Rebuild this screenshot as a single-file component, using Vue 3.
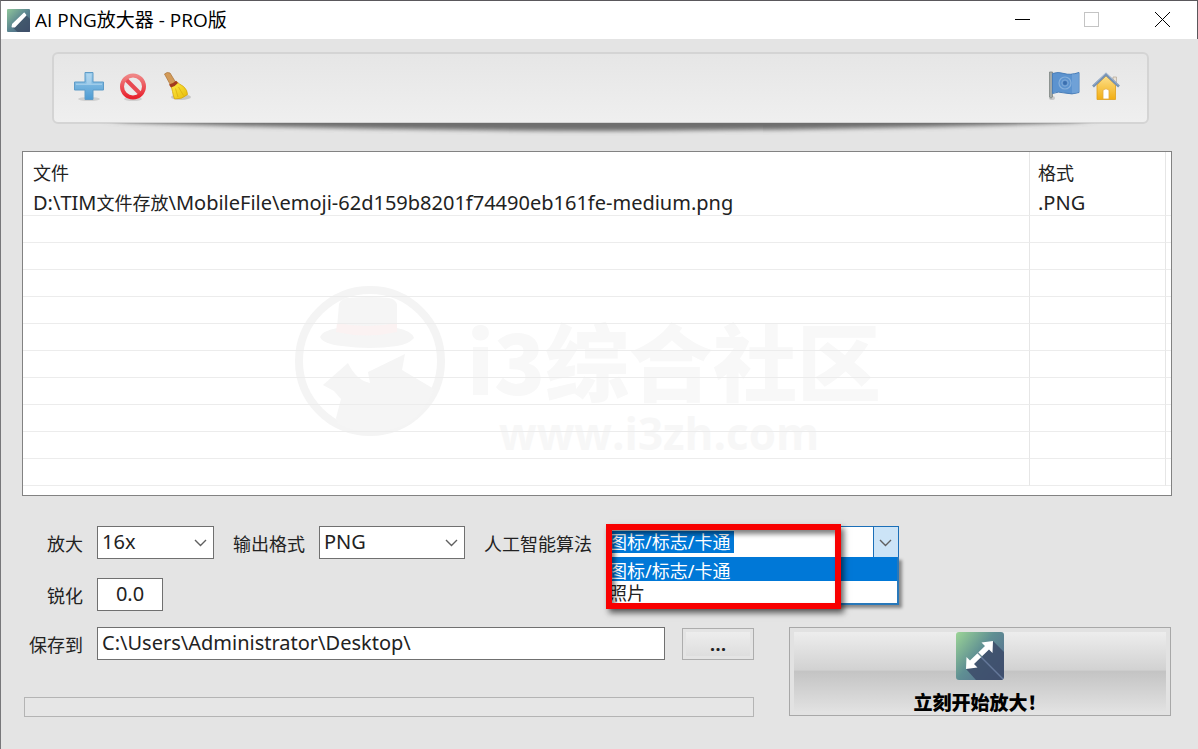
<template>
    <div class="window">
        <header class="titlebar">
            <svg class="app-icon" viewBox="0 0 48 48" aria-hidden="true">
                <defs>
                    <linearGradient id="logo-small" x1="0" y1="0" x2="1" y2="1">
                        <stop offset="0" stop-color="#8fc79a" />
                        <stop offset="0.5" stop-color="#5b8590" />
                        <stop offset="1" stop-color="#4a5c80" />
                    </linearGradient>
                </defs>
                <rect width="48" height="48" rx="2" fill="url(#logo-small)" />
                <path d="M38 11 48 21V48H22L10 37Z" fill="#39495f" opacity="0.7" />
                <path d="M36 9 39 13 16 37 11 37 12 32Z" fill="#fff" stroke="#fff" stroke-width="3" stroke-linejoin="round" />
            </svg>
            <h1>AI PNG放大器 - PRO版</h1>
            <div class="window-buttons">
                <button type="button" aria-label="最小化">
                    <svg viewBox="0 0 16 16"><path d="M1 7.500H16" stroke="#000" /></svg>
                </button>
                <button type="button" aria-label="最大化" disabled>
                    <svg viewBox="0 0 16 16"><rect x="0.500" y="0.500" width="14" height="14" fill="none" stroke="#c4c4c4" /></svg>
                </button>
                <button type="button" aria-label="关闭">
                    <svg viewBox="0 0 16 16"><path d="M1 0 16 15M16 0 1 15" stroke="#000" /></svg>
                </button>
            </div>
        </header>

        <main>
            <div class="toolbar">
                <div class="toolbar-panel">
                    <button type="button" aria-label="添加">
                        <svg viewBox="0 0 32 32">
                            <defs>
                                <linearGradient id="plus" x1="0" y1="0" x2="0" y2="1">
                                    <stop offset="0" stop-color="#9dccea" />
                                    <stop offset="1" stop-color="#4d9bd3" />
                                </linearGradient>
                            </defs>
                            <ellipse cx="16" cy="29" rx="11" ry="2" fill="#000" opacity="0.120" />
                            <path d="M12 2.500H20V12H30.500V20H20V29.500H12V20H1.500V12H12Z" fill="url(#plus)" stroke="#5f9cc8" />
                            <path d="M13.500 4H18.500V13.500H29V15H3V13.500H13.500Z" fill="#c5e2f4" opacity="0.500" />
                        </svg>
                    </button>
                    <button type="button" aria-label="移除">
                        <svg viewBox="0 0 32 32">
                            <defs>
                                <linearGradient id="ban" x1="0" y1="0" x2="0" y2="1">
                                    <stop offset="0" stop-color="#ef8585" />
                                    <stop offset="1" stop-color="#e8222e" />
                                </linearGradient>
                            </defs>
                            <ellipse cx="16" cy="29" rx="9" ry="2" fill="#000" opacity="0.120" />
                            <path d="M8 8.500 24 24.500" stroke="#e84a52" stroke-width="4" />
                            <circle cx="16" cy="16.500" r="11" fill="none" stroke="url(#ban)" stroke-width="4" />
                        </svg>
                    </button>
                    <button type="button" aria-label="清空">
                        <svg viewBox="0 0 32 32">
                            <defs>
                                <linearGradient id="broom" x1="0" y1="0" x2="1" y2="1">
                                    <stop offset="0" stop-color="#fff04a" />
                                    <stop offset="1" stop-color="#e8ba08" />
                                </linearGradient>
                            </defs>
                            <ellipse cx="20" cy="27" rx="10" ry="3" fill="#000" opacity="0.160" />
                            <path d="M3.500 4Q6 1.500 9 3L14.500 12 9.500 15Z" fill="#d29a58" stroke="#b07a40" stroke-width="0.800" />
                            <path d="M9 15 15.500 11.500Q18 14 22.500 16.500 26.500 20 26.500 24.500 21 29.500 13.500 29 12 25 11.500 21.500 11 17.500 9 15Z" fill="url(#broom)" stroke="#d5a50b" stroke-width="0.800" />
                            <path d="M14.500 18.500 17 27M17.500 17 22.500 25.500" stroke="#dcb010" stroke-width="0.800" fill="none" />
                            <path d="M8 14.500Q12 14 15 10.800L17 13Q14 16.500 10 17.500Z" fill="#a33a1f" />
                        </svg>
                    </button>
                    <span class="spacer"></span>
                    <button type="button" aria-label="语言">
                        <svg viewBox="0 0 32 32">
                            <ellipse cx="4" cy="28" rx="3" ry="2" fill="#000" opacity="0.150" />
                            <path d="M1.500 2H4.500V27Q3 29.500 1.500 27Z" fill="#a4aaa8" stroke="#7d8583" stroke-width="0.800" />
                            <path d="M4.500 3.500Q10 1.500 16 3.500T31 2.500V22.500Q24 25 17 23T4.500 23.500Z" fill="#5c93cf" stroke="#4a7eb8" />
                            <path d="M24 4Q28 4.500 31 3V22Q27 24 24 23Z" fill="#82b0df" opacity="0.500" />
                            <circle cx="17" cy="13" r="6" fill="none" stroke="#86b0dc" stroke-width="1.200" />
                            <circle cx="17" cy="13" r="3.200" fill="none" stroke="#7faad8" />
                            <circle cx="17" cy="13" r="2" fill="#3b6fae" />
                        </svg>
                    </button>
                    <button type="button" aria-label="主页">
                        <svg viewBox="0 0 32 32">
                            <defs>
                                <linearGradient id="house" x1="0" y1="0" x2="0" y2="1">
                                    <stop offset="0" stop-color="#fde08c" />
                                    <stop offset="1" stop-color="#f2ae12" />
                                </linearGradient>
                            </defs>
                            <path d="M23 7H26.500V14L23 11Z" fill="#e9e1d5" stroke="#b5a896" stroke-width="0.700" />
                            <path d="M7 15 16 6 25.500 15V29.500H7Z" fill="url(#house)" stroke="#e0a01a" stroke-width="0.800" />
                            <path d="M13 20Q16 17.500 19 20V29H13Z" fill="#fff" stroke="#e3a93a" stroke-width="0.800" />
                            <path d="M3 16.500 16 4.200 29 16.500" fill="none" stroke="#7591b3" stroke-width="2.600" />
                            <path d="M3.500 15 16 3.200 28.500 15" fill="none" stroke="#a9bdd4" stroke-width="0.800" />
                        </svg>
                    </button>
                </div>
                <svg class="toolbar-shadow" viewBox="0 0 1000 16" preserveAspectRatio="none" aria-hidden="true">
                    <defs>
                        <filter id="soften" filterUnits="userSpaceOnUse" x="0" y="-20" width="1000" height="50">
                            <feGaussianBlur stdDeviation="8 2" />
                        </filter>
                    </defs>
                    <path d="M60 -12H940V-1Q750 7 500 8 250 7 60 -1Z" fill="#6e6e6e" filter="url(#soften)" />
                </svg>
            </div>

            <div class="file-list">
                <svg class="watermark" viewBox="0 0 590 190" aria-hidden="true">
                    <circle cx="75" cy="75" r="71" fill="none" stroke="#f4f4f4" stroke-width="8" />
                    <g fill="#f5f5f5">
                        <path d="M44 18Q46 13 52 12 75 10 94 12 100 13 102 18V42Q117 45 119 52 114 58 102 60 75 64 47 60 28 58 25 51 27 45 42 42Z" />
                        <path d="M28 99 53 77Q61 94 75 97L73 86 110 68 107 84 139 103Q130 128 111 138 76 154 43 138L41 132 46 113 39 105Z" />
                    </g>
                    <path d="M42 37Q72 43 102 37V46Q72 53 41 46Z" fill="#fbf2f2" />
                    <text x="172" y="109" class="mark-name">i3综合社区</text>
                    <text x="204" y="164" class="mark-url">www.i3zh.com</text>
                </svg>
                <table>
                    <thead>
                        <tr>
                            <th scope="col">文件</th>
                            <th scope="col" class="format">格式</th>
                            <th class="edge" aria-hidden="true"></th>
                        </tr>
                    </thead>
                    <tbody>
                        <tr>
                            <td>D:\TIM<span class="han">文件存放</span>\MobileFile\emoji-62d159b8201f74490eb161fe-medium.png</td>
                            <td class="format">.PNG</td>
                            <td class="edge"></td>
                        </tr>
                        <tr v-for="n in emptyRows" :key="n">
                            <td></td>
                            <td class="format"></td>
                            <td class="edge"></td>
                        </tr>
                    </tbody>
                </table>
            </div>

            <form class="settings" @submit.prevent>
                <div class="row">
                    <label class="lead" for="scale">放大</label>
                    <div class="select scale">
                        <select id="scale" v-model="scale">
                            <option v-for="s in scales" :key="s">{{ s }}</option>
                        </select>
                        <svg viewBox="0 0 12 8" aria-hidden="true"><path d="M0.500 1 6 6.500 11.500 1" /></svg>
                    </div>
                    <label class="inner" for="format">输出格式</label>
                    <div class="select output">
                        <select id="format" v-model="format">
                            <option v-for="f in formats" :key="f">{{ f }}</option>
                        </select>
                        <svg viewBox="0 0 12 8" aria-hidden="true"><path d="M0.500 1 6 6.500 11.500 1" /></svg>
                    </div>
                    <label class="inner" for="model">人工智能算法</label>
                    <div class="select model open">
                        <select id="model" v-model="model">
                            <option v-for="m in models" :key="m">{{ m }}</option>
                        </select>
                        <svg viewBox="0 0 12 8" aria-hidden="true"><path d="M0.500 1 6 6.500 11.500 1" /></svg>
                        <ul role="listbox" aria-label="人工智能算法">
                            <li
                                v-for="m in models"
                                :key="m"
                                role="option"
                                :aria-selected="m === model"
                                :class="{ active: m === model }"
                                @click="model = m"
                            >{{ m }}</li>
                        </ul>
                        <div class="highlight"></div>
                    </div>
                </div>

                <div class="row sharpen">
                    <label class="lead" for="sharpen">锐化</label>
                    <input id="sharpen" v-model="sharpen" type="text">
                </div>

                <div class="bottom">
                    <div class="target">
                        <div class="row">
                            <label class="lead" for="folder">保存到</label>
                            <input id="folder" v-model="folder" type="text">
                            <button type="button" class="browse" aria-label="浏览">...</button>
                        </div>
                        <div class="progress" role="progressbar" aria-valuenow="0" aria-valuemin="0" aria-valuemax="100"></div>
                    </div>
                    <button type="submit" class="start">
                        <svg viewBox="0 0 48 48" aria-hidden="true">
                            <defs>
                                <linearGradient id="logo" x1="0" y1="0" x2="1" y2="0.800">
                                    <stop offset="0" stop-color="#9cd596" />
                                    <stop offset="0.500" stop-color="#5f8f93" />
                                    <stop offset="1" stop-color="#566a90" />
                                </linearGradient>
                            </defs>
                            <rect width="48" height="48" rx="3" fill="url(#logo)" />
                            <path d="M37 9 48 20V45L46 48H20L10 37Z" fill="#3c4b69" opacity="0.850" />
                            <path d="M24 24 47 47" stroke="#65789a" stroke-width="1.500" />
                            <path d="M37 9 36.500 21 33 17.500 18 32 21.500 35.500 10 37 10.500 25 14 28.500 29 14 25.500 10.500Z" fill="#fff" />
                            <path d="M21.500 20.500 26 25" stroke="#6c8b94" stroke-width="1.200" />
                        </svg>
                        <span>立刻开始放大！</span>
                    </button>
                </div>
            </form>
        </main>
    </div>
</template>

<script setup>
    import { ref } from 'vue';

    const emptyRows = 10;
    const scales = ['2x', '4x', '8x', '16x'];
    const formats = ['PNG', 'JPG', 'BMP'];
    const models = ['图标/标志/卡通', '照片'];

    const scale = ref('16x');
    const format = ref('PNG');
    const model = ref('图标/标志/卡通');
    const sharpen = ref('0.0');
    const folder = ref('C:\\Users\\Administrator\\Desktop\\');
</script>

<style>
body {
  background: #e4e4e4;
}
</style>

<style scoped>
.window {
  min-height: 100vh;
  box-sizing: border-box;
  border-top: 1px solid #5a585c;
  border-left: 1px solid #77777a;
  background: #e4e4e4;
  font-family: "Noto Sans", "Noto Sans CJK SC", sans-serif;
  font-size: 20px;
  color: #222;
}
button,
input,
select {
  box-sizing: border-box;
  margin: 0;
  padding: 0;
  border: 0;
  background: none;
  font: inherit;
  color: inherit;
}
.titlebar {
  display: flex;
  align-items: center;
  height: 38px;
  padding-left: 6px;
  border-right: 1px solid #5a585c;
  background: #fff;
}
.app-icon {
  width: 23px;
  height: 23px;
}
h1 {
  flex: 1;
  margin: 0 0 0 5px;
  font-family: "Open Sans", "Noto Sans CJK SC", sans-serif;
  font-size: 19px;
  font-weight: 400;
  line-height: 24px;
  color: #000;
}
.window-buttons {
  display: flex;
}
.window-buttons button {
  display: flex;
  justify-content: center;
  align-items: center;
  width: 70px;
  height: 38px;
}
.window-buttons svg {
  width: 16px;
  height: 16px;
  overflow: visible;
}
main {
  padding: 13px 26px 32px 21px;
}
.toolbar {
  margin: 0 23px 0 30px;
}
.toolbar-panel {
  display: flex;
  align-items: center;
  gap: 12px;
  height: 72px;
  box-sizing: border-box;
  padding: 0 25px 4px 19px;
  border: 2px solid #d4d4d4;
  border-radius: 6px;
  background: linear-gradient(#e6e6e6, #efefef);
}
.toolbar-panel button {
  width: 32px;
  height: 32px;
}
.toolbar-panel button svg {
  display: block;
  width: 32px;
  height: 32px;
}
.toolbar-panel .spacer {
  flex: 1;
}
.toolbar-panel .spacer ~ button + button {
  margin-left: -2px;
}
.toolbar-shadow {
  display: block;
  width: 100%;
  height: 16px;
  margin-top: -1px;
}
.file-list {
  position: relative;
  margin-top: 12px;
  padding-bottom: 9px;
  border: 1px solid #828282;
  background: #fff;
}
.watermark {
  position: absolute;
  top: 134px;
  left: calc(50% - 302px);
  width: 590px;
  height: 190px;
}
.mark-name {
  font-family: "Noto Sans CJK SC", sans-serif;
  font-size: 84px;
  font-weight: 900;
  fill: #f8f8f8;
}
.mark-url {
  font-family: "Open Sans", sans-serif;
  font-size: 44px;
  font-weight: 700;
  fill: #f7f7f7;
}
table {
  position: relative;
  width: 100%;
  border-collapse: separate;
  border-spacing: 0;
  table-layout: fixed;
}
th,
td {
  box-sizing: border-box;
  padding: 0 0 0 10px;
  text-align: left;
  font-weight: 400;
  white-space: nowrap;
}
th {
  height: 37px;
  padding-top: 2px;
  font-size: 18px;
}
td {
  height: 27px;
  padding-top: 2px;
  border-bottom: 1px solid #ececec;
  line-height: 24px;
}
.format {
  width: 136px;
  padding-left: 8px;
  border-left: 1px solid #e6e6e6;
}
.edge {
  width: 6px;
  padding: 0;
  border-left: 1px solid #e6e6e6;
}
.han {
  font-size: 18px;
}
.settings {
  padding-top: 30px;
}
.row {
  display: flex;
  align-items: center;
}
label {
  font-size: 18px;
  line-height: 26px;
  padding-top: 2px;
  white-space: nowrap;
}
.lead {
  width: 61px;
  margin-right: 14px;
  text-align: right;
}
.inner {
  margin: 0 14px 0 19px;
}
.select {
  position: relative;
}
.select select,
input {
  height: 33px;
  border: 1px solid #707070;
  background: #fff;
  line-height: 26px;
}
.select select {
  display: block;
  width: 100%;
  padding: 0 24px 2px 4px;
  appearance: none;
}
.select > svg {
  position: absolute;
  top: 13px;
  right: 7px;
  width: 13px;
  height: 8px;
  fill: none;
  stroke: #606060;
  stroke-width: 1.4;
  pointer-events: none;
}
.scale {
  width: 117px;
}
.output {
  width: 146px;
}
.model {
  width: 293px;
  font-size: 18px;
}
.model select {
  border-color: #1b6fb8;
  padding-left: 2px;
  color: #fff;
  background:
    linear-gradient(#1b6fb8, #1b6fb8) right 24px top / 1px 100% no-repeat,
    linear-gradient(#cce4f7, #cce4f7) right top / 24px 100% no-repeat,
    linear-gradient(#0078d7, #0078d7) left 1px top 4px / 126px 22px no-repeat,
    #fff;
}
.model select option {
  color: #111;
}
.model ul {
  position: absolute;
  top: 31px;
  left: 0;
  width: 100%;
  box-sizing: border-box;
  margin: 0;
  padding: 0;
  border: 2px solid #2878ba;
  border-top: 0;
  background: #fff;
  box-shadow: 3px 3px 3px rgba(0, 0, 0, 0.4);
  list-style: none;
}
.model li {
  height: 22px;
  padding-left: 1px;
  line-height: 24px;
}
.model li.active {
  height: 24px;
  line-height: 28px;
  background: #0078d7;
  color: #fff;
}
.highlight {
  position: absolute;
  top: -2px;
  left: 0;
  width: 235px;
  height: 85px;
  box-sizing: border-box;
  border: 6px solid #f80000;
  box-shadow: 3px 4px 6px rgba(0, 0, 0, 0.6), inset 3px 4px 5px rgba(0, 0, 0, 0.5);
  pointer-events: none;
}
.sharpen {
  margin-top: 19px;
}
#sharpen {
  width: 66px;
  padding-bottom: 2px;
  text-align: center;
}
.bottom {
  display: grid;
  grid-template-columns: 732fr 382fr;
  gap: 35px;
  margin: 16px 1px 0 0;
}
#folder {
  flex: 1;
  min-width: 0;
  padding: 0 4px 2px 4px;
}
.browse {
  width: 72px;
  height: 32px;
  margin-left: 17px;
  border: 1px solid #adadad;
  background: linear-gradient(#efefef, #dcdcdc);
  box-shadow: inset 0 0 0 3px #e4e4e4;
  font-weight: 600;
  line-height: 26px;
}
.progress {
  height: 20px;
  box-sizing: border-box;
  margin: 37px 0 0 2px;
  border: 1px solid #b4b4b4;
  background: #e6e6e6;
}
.start {
  display: flex;
  flex-direction: column;
  align-items: center;
  height: 89px;
  padding-top: 4px;
  border: 1px solid #a8a8a8;
  background: linear-gradient(#f0f0f0, #d2d2d2 48%, #c4c4c4 50%, #e4e4e4);
  box-shadow: inset 0 0 0 4px #e2e2e2;
}
.start svg {
  width: 48px;
  height: 48px;
}
.start span {
  margin-top: 9px;
  font-family: "Noto Sans CJK SC", sans-serif;
  font-size: 19px;
  font-weight: 900;
  line-height: 26px;
  color: #000;
}
</style>
